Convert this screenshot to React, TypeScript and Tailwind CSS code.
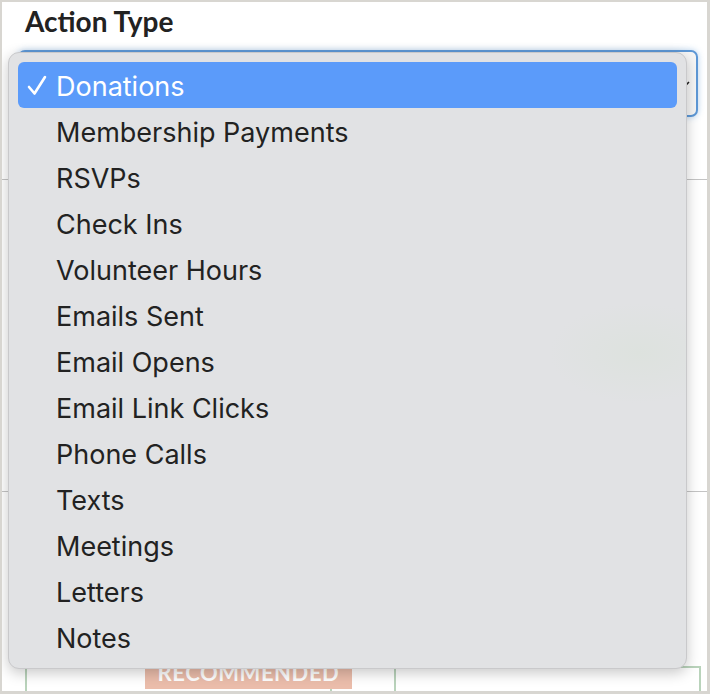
import React from 'react';

const ACTION_TYPES = [
  'Donations',
  'Membership Payments',
  'RSVPs',
  'Check Ins',
  'Volunteer Hours',
  'Emails Sent',
  'Email Opens',
  'Email Link Clicks',
  'Phone Calls',
  'Texts',
  'Meetings',
  'Letters',
  'Notes',
];

export default function App() {
  const selected = 'Donations';

  return (
    <div className="w-[710px] h-[694px] bg-[#d8d6d1] pt-[2px] pl-[2px] pr-[3px] pb-[3px]">
      <div className="relative h-full bg-white overflow-hidden">
        {/* Heading */}
        <div className="h-[48px] pl-[23px] pt-[1px] text-[28px] font-bold leading-[36px] text-[#222] font-['Lato',sans-serif]">
          Action Type
        </div>

        {/* Select (closed state, under the open menu) */}
        <div className="mx-[16px] mr-[9px] h-[67px] rounded-[7px] border-2 border-[#5e98d6] bg-[#f6f6f6] shadow-[0_0_6px_rgba(94,152,214,0.45)] flex items-center justify-end pr-[6px]">
          <svg width="12" height="12" viewBox="0 0 12 12" className="text-[#222]">
            <path d="M1 4 L6 9 L11 4" fill="none" stroke="currentColor" strokeWidth="1.6" />
          </svg>
        </div>

        {/* Form rows behind */}
        <div className="h-[63px] border-b border-[#c4c4c4]" />
        <div className="h-[312px] border-b border-[#c4c4c4]" />
        <div className="h-[174px]" />
        <div className="flex gap-[62px] pl-[23px] pr-[6px]">
          <div className="relative flex-1 h-[40px] border-l-2 border-t-2 border-r-2 border-[#b9d3bb]">
            <div className="absolute left-[118px] top-[-12px] w-[207px] h-[33px] bg-[#ebbdab] flex items-center justify-center text-white font-bold text-[22px] tracking-wide font-['Lato',sans-serif]">
              RECOMMENDED
            </div>
          </div>
          <div className="flex-1 h-[40px] border-l-2 border-t-2 border-r-2 border-[#b9d3bb]" />
        </div>

        {/* Open dropdown menu */}
        <div className="absolute left-[6px] top-[50px] w-[679px] h-[617px] rounded-[11px] bg-[#e1e2e4] bg-[radial-gradient(ellipse_90px_50px_at_630px_300px,#dde2de_0%,#e1e2e4_100%)] border border-[#c9c9cb] shadow-[0_4px_14px_rgba(0,0,0,0.22)] px-[9px] pt-[9px] font-['Inter',sans-serif]">
          {ACTION_TYPES.map((t) => {
            const active = t === selected;
            return (
              <div
                key={t}
                className={`relative h-[46px] flex items-center pl-[38px] pt-[4px] text-[27px] rounded-[6px] ${
                  active ? 'bg-[#5b9bfa] text-white' : 'text-[#222]'
                }`}
              >
                {active && (
                  <svg
                    className="absolute left-[9px] top-[13px]"
                    width="20"
                    height="21"
                    viewBox="0 0 20 21"
                  >
                    <path d="M2 12 L7.5 18.5 L18 2" fill="none" stroke="white" strokeWidth="2.6" strokeLinecap="round" strokeLinejoin="round" />
                  </svg>
                )}
                {t}
              </div>
            );
          })}
        </div>
      </div>
    </div>
  );
}
